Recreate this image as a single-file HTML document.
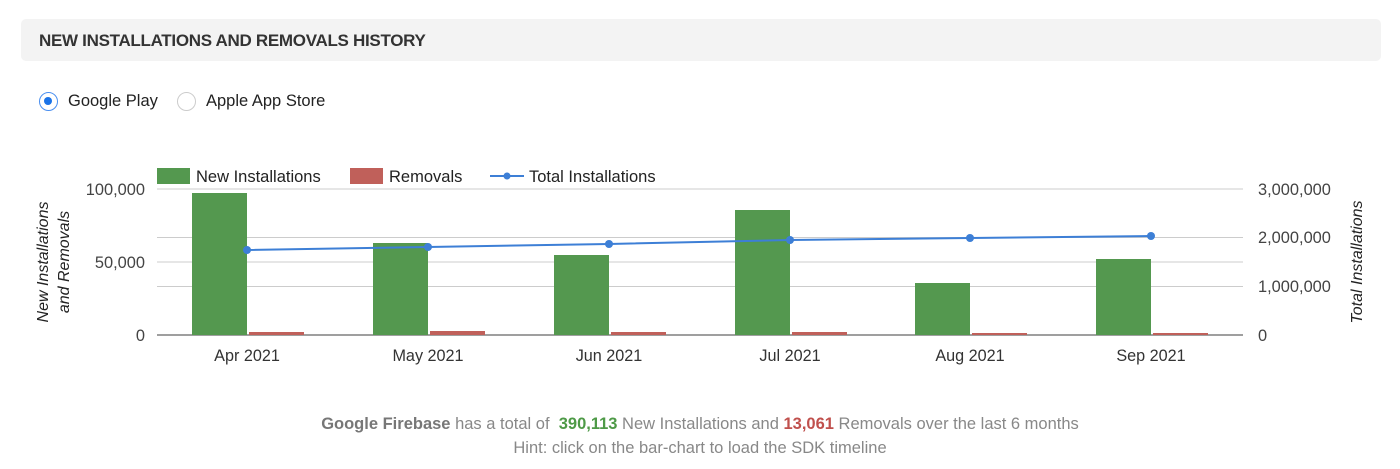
<!DOCTYPE html>
<html><head><meta charset="utf-8"><style>
body{margin:0;width:1400px;height:469px;background:#fff;font-family:"Liberation Sans",Arial,sans-serif;position:relative;overflow:hidden}
.hdr{position:absolute;left:21px;top:19px;width:1360px;height:42px;background:#f3f3f3;border-radius:5px}
.hdr span{position:absolute;left:18px;top:12px;font-size:17px;font-weight:bold;color:#333;letter-spacing:-0.3px}
.radio{position:absolute;top:92px;width:19px;height:19px;border-radius:50%;box-sizing:border-box}
.lbl{position:absolute;top:92px;font-size:16.5px;color:#222}
.foot{position:absolute;width:1400px;left:0;text-align:center;font-size:16.5px;color:#888}
</style></head><body>
<div class="hdr"><span>NEW INSTALLATIONS AND REMOVALS HISTORY</span></div>
<div class="radio" style="left:39px;border:1.5px solid #4a8ff0;"><div style="position:absolute;left:4px;top:4px;width:8px;height:8px;border-radius:50%;background:#1a73e8"></div></div>
<div class="lbl" style="left:68px">Google Play</div>
<div class="radio" style="left:177px;border:1px solid #ccc"></div>
<div class="lbl" style="left:206px">Apple App Store</div>
<svg width="1400" height="469" style="position:absolute;left:0;top:0" font-family="Liberation Sans, Arial, sans-serif">
<g stroke="#ccc" stroke-width="1">
<line x1="157" x2="1243" y1="189" y2="189"/><line x1="157" x2="1243" y1="237.5" y2="237.5"/>
<line x1="157" x2="1243" y1="262" y2="262"/><line x1="157" x2="1243" y1="286.5" y2="286.5"/>
</g>
<line x1="157" x2="1243" y1="335" y2="335" stroke="#666" stroke-width="1.2"/>
<g font-size="16.4" fill="#444" text-anchor="end">
<text x="145" y="195">100,000</text><text x="145" y="268">50,000</text><text x="145" y="341">0</text>
</g>
<g font-size="16.4" fill="#444">
<text x="1258" y="195">3,000,000</text><text x="1258" y="243">2,000,000</text><text x="1258" y="292">1,000,000</text><text x="1258" y="341">0</text>
</g>
<text transform="translate(48,262) rotate(-90)" font-size="16" font-style="italic" fill="#222" text-anchor="middle">New Installations</text>
<text transform="translate(69,262) rotate(-90)" font-size="16" font-style="italic" fill="#222" text-anchor="middle">and Removals</text>
<text transform="translate(1362,262) rotate(-90)" font-size="16" font-style="italic" fill="#222" text-anchor="middle">Total Installations</text>
<g fill="#54984f">
<rect x="192" y="193" width="55" height="142"/><rect x="373" y="243" width="55" height="92"/>
<rect x="554" y="255" width="55" height="80"/><rect x="735" y="210" width="55" height="125"/>
<rect x="915" y="283" width="55" height="52"/><rect x="1096" y="259" width="55" height="76"/>
</g>
<g fill="#c0605a">
<rect x="249" y="332" width="55" height="3"/><rect x="430" y="331" width="55" height="4"/>
<rect x="611" y="332" width="55" height="3"/><rect x="792" y="332" width="55" height="3"/>
<rect x="972" y="333" width="55" height="2"/><rect x="1153" y="333" width="55" height="2"/>
</g>
<polyline points="247,250 428,247 609,244 790,240 970,238 1151,236" fill="none" stroke="#3d7fd6" stroke-width="2"/>
<g fill="#3d7fd6">
<circle cx="247" cy="250" r="4"/><circle cx="428" cy="247" r="4"/><circle cx="609" cy="244" r="4"/>
<circle cx="790" cy="240" r="4"/><circle cx="970" cy="238" r="4"/><circle cx="1151" cy="236" r="4"/>
</g>
<g font-size="16.2" fill="#333" text-anchor="middle">
<text x="247" y="361">Apr 2021</text><text x="428" y="361">May 2021</text><text x="609" y="361">Jun 2021</text>
<text x="790" y="361">Jul 2021</text><text x="970" y="361">Aug 2021</text><text x="1151" y="361">Sep 2021</text>
</g>
<rect x="157" y="168" width="33" height="16" fill="#54984f"/>
<text x="196" y="182" font-size="16.5" fill="#222">New Installations</text>
<rect x="350" y="168" width="33" height="16" fill="#c0605a"/>
<text x="389" y="182" font-size="16.5" fill="#222">Removals</text>
<line x1="490" x2="524" y1="176" y2="176" stroke="#3d7fd6" stroke-width="2"/>
<circle cx="507" cy="176" r="3.5" fill="#3d7fd6"/>
<text x="529" y="182" font-size="16.5" fill="#222">Total Installations</text>
</svg>
<div class="foot" style="top:415px"><b style="color:#777">Google Firebase</b> has a total of &nbsp;<b style="color:#4e9a47">390,113</b> New Installations and <b style="color:#c0504d">13,061</b> Removals over the last 6 months</div>
<div class="foot" style="top:439px">Hint: click on the bar-chart to load the SDK timeline</div>
</body></html>
